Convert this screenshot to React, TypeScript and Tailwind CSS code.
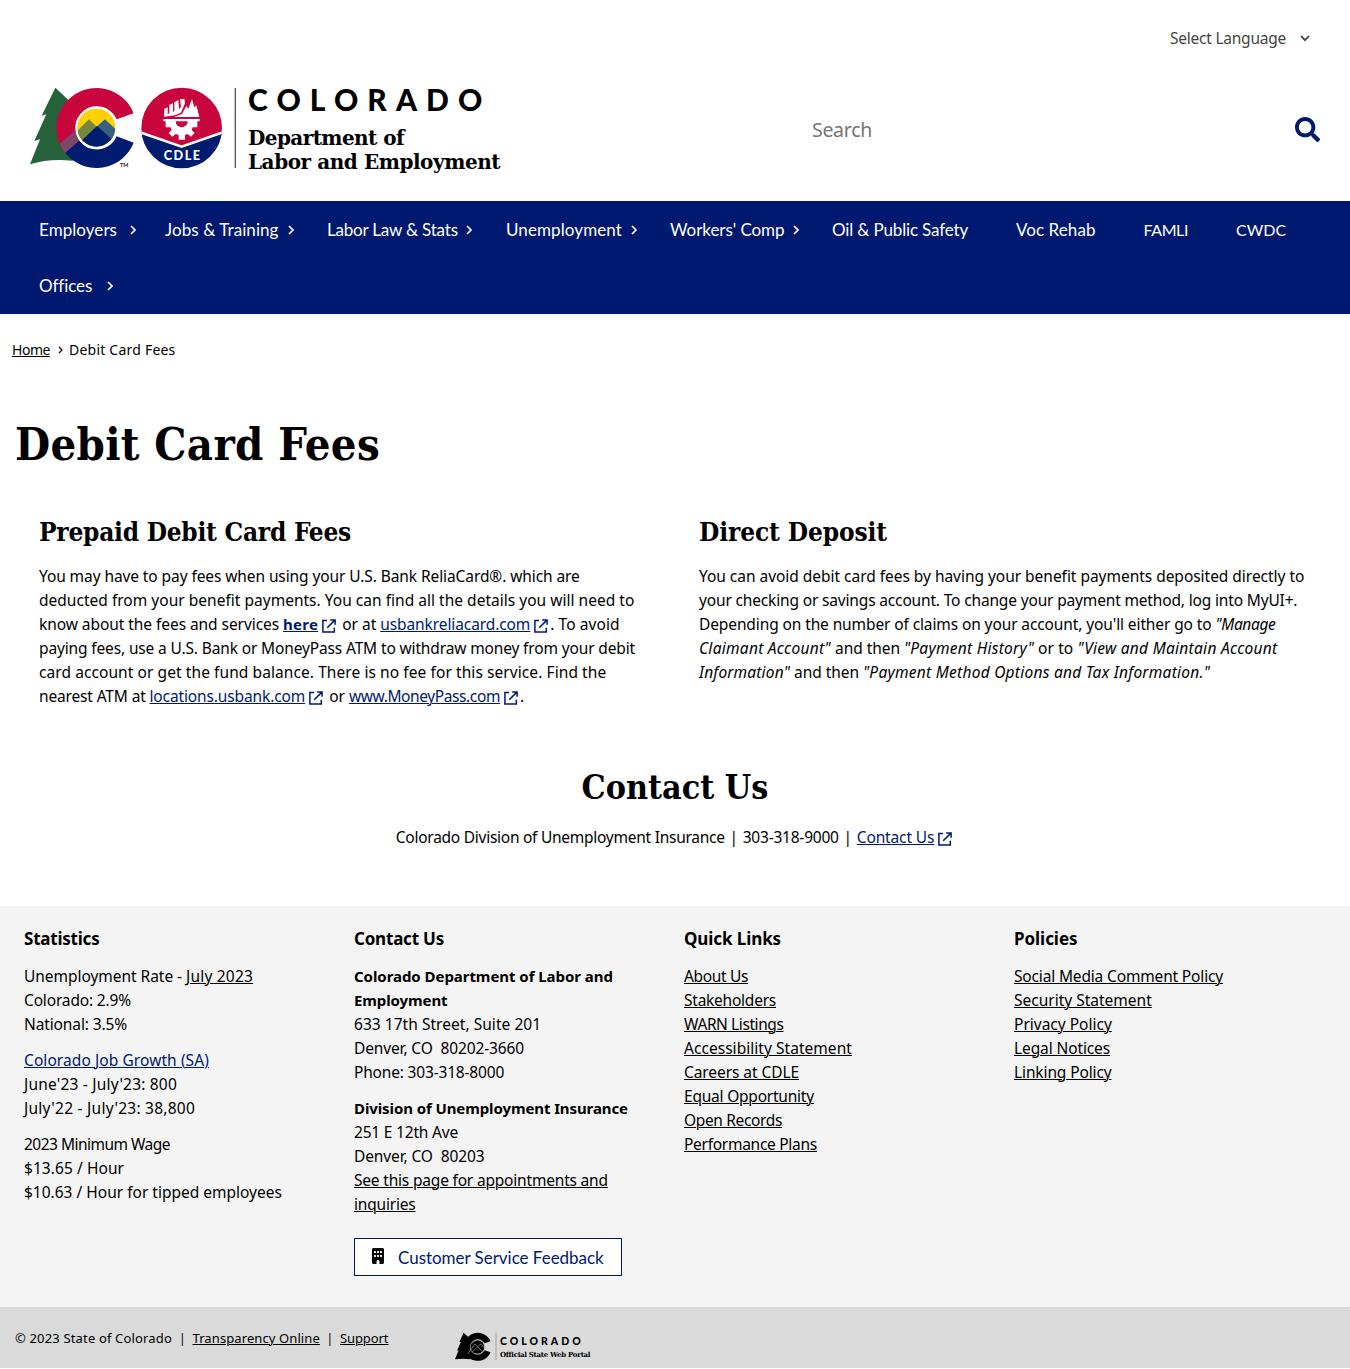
import type { ReactNode } from "react";
import { FaSearch } from "react-icons/fa";
import { FaBuilding } from "react-icons/fa6";

type Run = [text: string, tracking: string];

function Line({ children }: { children: ReactNode }) {
  return <span className="block h-6 whitespace-pre leading-6">{children}</span>;
}

function S({ t, c = "" }: { t: string; c?: string }) {
  return <span className={c}>{t}</span>;
}

function A({ t, c = "" }: { t: string; c?: string }) {
  return (
    <a href="#" className={`underline decoration-1 underline-offset-[0.5px] ${c}`}>
      {t}
    </a>
  );
}

function Ext() {
  return (
    <svg viewBox="0 0 14 14" fill="none" stroke="#001970" strokeWidth="1.5" className="ml-1 mr-[2px] inline-block h-[14px] w-[14px] align-[-3px]">
      <path d="M5 1.6H.9V13.1H12.3V8.8M5.2 8.8L12.4 1.6M8.2 1H13.1V5.8" />
    </svg>
  );
}

function Chevron({ className }: { className: string }) {
  return (
    <svg viewBox="0 0 7 10" fill="none" stroke="currentColor" strokeWidth="1.7" className={`h-[10px] w-[7px] shrink-0 ${className}`}>
      <path d="M1 1L5 5L1 9" />
    </svg>
  );
}

const nav = [
  { t: "Employers", w: "w-[126px]", c: "tracking-[.06px]", m: "ml-[13px]" },
  { t: "Jobs & Training", w: "w-[162px]", c: "tracking-[.08px]", m: "ml-[9px]" },
  { t: "Labor Law & Stats", w: "w-[179px]", c: "tracking-[-.2px]", m: "ml-[8px]" },
  { t: "Unemployment", w: "w-[164px]", c: "tracking-[.1px]", m: "ml-[9px]" },
  { t: "Workers' Comp", w: "w-[162px]", c: "tracking-[-.06px]", m: "ml-[9px]" },
  { t: "Oil & Public Safety", w: "w-[184px]", c: "tracking-[-.15px]" },
  { t: "Voc Rehab", w: "w-[127.5px]", c: "tracking-[.07px]" },
  { t: "FAMLI", w: "w-[92.5px]", c: "text-[16px] tracking-[-.4px]" },
  { t: "CWDC", w: "w-[80px]", c: "text-[16px]" },
  { t: "Offices", w: "w-[126px]", c: "tracking-[-.1px]", m: "ml-[15px]" },
];

const quick: Run[] = [
  ["About Us", "tracking-[-.35px]"],
  ["Stakeholders", "tracking-[-.24px]"],
  ["WARN Listings", "tracking-[-.41px]"],
  ["Accessibility Statement", "tracking-[.04px]"],
  ["Careers at CDLE", "tracking-[-.07px]"],
  ["Equal Opportunity", "tracking-[-.22px]"],
  ["Open Records", "tracking-[-.35px]"],
  ["Performance Plans", "tracking-[-.28px]"],
];

const policies: Run[] = [
  ["Social Media Comment Policy", "tracking-[-.16px]"],
  ["Security Statement", ""],
  ["Privacy Policy", ""],
  ["Legal Notices", "tracking-[-.11px]"],
  ["Linking Policy", "tracking-[-.12px]"],
];

function Logo() {
  return (
    <svg viewBox="0 0 630 270" className="h-[90px] w-[210px]">
      <defs>
        <clipPath id="cShape">
          <path d="M323 88A120 120 0 1 0 323 176L272 157A65 65 0 1 1 272 106Z" />
        </clipPath>
        <clipPath id="inner"><circle cx="211" cy="131" r="57" /></clipPath>
        <clipPath id="badge"><circle cx="467" cy="132" r="121" /></clipPath>
      </defs>
      <path d="M88 11L47 95L61 91L25 171L42 166L12 241Q70 222 140 230L180 180L140 60Z" fill="#256239" />
      <circle cx="211" cy="131" r="66" fill="#fff" />
      <g clipPath="url(#cShape)">
        <rect x="80" width="260" height="140" fill="#c8053c" />
        <rect x="80" y="80" width="90" height="120" fill="#c8053c" />
        <path d="M90 188L158 132V172L118 212Z" fill="#7d4769" />
        <path d="M110 214L165 165L240 140H340V260H120Z" fill="#001c70" />
      </g>
      <g clipPath="url(#inner)">
        <rect x="150" y="70" width="125" height="125" fill="#ffd100" />
        <path d="M145 149L189 106L214 130L160 190Z" fill="#76883e" />
        <path d="M208 131L237 106L275 141V190Z" fill="#35627f" />
        <path d="M152 184L213 126L270 176V200H150Z" fill="#001c70" />
      </g>
      <text x="282" y="249" fontSize="16" fontWeight="700" fontFamily="Lato" fill="#111">TM</text>
      <g clipPath="url(#badge)">
        <rect x="340" width="260" height="200" fill="#c8053c" />
        <path d="M340 146L467 190L594 146V260H340Z" fill="#001c70" />
        <path d="M340 144L467 188L594 144" fill="none" stroke="#fff" strokeWidth="8" />
      </g>
      <g fill="#fff">
        <path d="M412 105H521V112H514V130H500L497 138L506 147L495 158L485 150L477 153V167H458V153L449 150L439 158L428 147L437 138L433 130H419V112H412Z" />
        <path d="M449 112H485A18 18 0 0 1 449 112Z" fill="#c8053c" />
        <path d="M414 98L415 74L425 70V90L430 88V62L441 58V83L445 81V55L457 48L459 76L465 68L462 46L475 44L477 58L465 86L447 94Z" />
        <path d="M444 99L468 90L481 66L487 74L498 45L505 70L511 64L520 99Z" />
      </g>
      <path d="M412 101H521" stroke="#c8053c" strokeWidth="4" />
      <text x="413" y="227" fontSize="38" fontWeight="900" fontFamily="Lato" fill="#fff" textLength="109">CDLE</text>
      <path d="M628 12V252" stroke="#555" strokeWidth="4" />
    </svg>
  );
}

function MonoLogo() {
  return (
    <svg viewBox="0 0 126 90" className="h-[30px] w-[42px]">
      <path d="M26 2L13 30L18 29L6 56L11 55L0 82Q25 78 46 82L60 60L45 20Z" fill="#000" />
      <path d="M107 28A42 42 0 1 0 107 61L88 55A22 22 0 1 1 88 34Z" fill="#000" />
      <circle cx="68" cy="45" r="20" fill="#000" />
      <circle cx="68" cy="45" r="22.5" fill="none" stroke="#bbb" strokeWidth="2" />
      <path d="M38 66L60 36L68 44L77 36L90 50M52 60L68 44L84 60" fill="none" stroke="#aaa" strokeWidth="2" />
      <path d="M123 2V84" stroke="#888" strokeWidth="2" />
    </svg>
  );
}

const h2 = "whitespace-nowrap font-bold [font-stretch:condensed] font-['DejaVu_Serif_Condensed','DejaVu_Serif',serif]";
const b15 = "text-[15px] font-bold";
const fh = "h-6 whitespace-nowrap text-[17px] font-bold leading-6";

export default function App() {
  return (
    <div className="h-[1368px] w-[1350px] overflow-hidden bg-white font-['Noto_Sans',sans-serif] text-[15.5px] text-black">
      <header className="h-[201px]">
        <div className="flex h-[84px] justify-end pr-[40px] pt-[26px]">
          <div className="flex h-6 items-center leading-6 text-[#444]">
            <span className="tracking-[-.24px]">Select Language</span>
            <svg viewBox="0 0 10 7" fill="none" stroke="#444" strokeWidth="1.8" className="ml-[14px] mt-px h-[7px] w-[10px]">
              <path d="M1 1L5 5.2L9 1" />
            </svg>
          </div>
        </div>
        <div className="flex pl-[26px]">
          <Logo />
          <div className="ml-3 w-[564px]">
            <div className="h-[30px] font-['Lato',sans-serif] text-[30px] font-black leading-[30px] tracking-[9.1px]">COLORADO</div>
            <div className="mt-[13px] whitespace-nowrap font-['DejaVu_Serif',serif] text-[20px] font-bold leading-[23.5px]">
              <div className="tracking-[-.57px]">Department of</div>
              <div className="tracking-[-.44px]">Labor and Employment</div>
            </div>
          </div>
          <div className="mt-[30px] flex h-[30px] w-[508px] items-center justify-between text-[19.5px] text-[#757575]">
            <span className="pt-[2px] tracking-[-.29px]">Search</span>
            <FaSearch className="h-[25px] w-[25px] text-[#001970]" />
          </div>
        </div>
      </header>

      <nav className="flex h-[113px] flex-wrap content-start bg-[#001970] pl-[39px] font-['Lato',sans-serif] text-[17px] text-white">
        {nav.map((n) => (
          <a key={n.t} href="#" className={`flex h-14 items-center whitespace-nowrap pt-px ${n.w}`}>
            <span className={n.c}>{n.t}</span>
            {n.m && <Chevron className={`mt-px ${n.m}`} />}
          </a>
        ))}
      </nav>

      <div className="flex h-12 items-end pl-3 text-[14px] leading-6">
        <A t="Home" c="tracking-[-.46px]" />
        <svg viewBox="0 0 5 8" fill="none" stroke="#111" strokeWidth="1.3" className="mb-[8px] ml-[8px] mr-[6px] h-[8px] w-[5px]">
          <path d="M1 1L4 4L1 7" />
        </svg>
        <span className="tracking-[.22px]">Debit Card Fees</span>
      </div>

      <h1 className={`mt-[56px] h-[54px] pl-[15px] text-[45px] leading-[54px] tracking-[.33px] ${h2}`}>Debit Card Fees</h1>

      <main className="mt-[44px] flex pl-[39px]">
        <section className="w-[660px]">
          <h2 className={`h-8 text-[26px] leading-8 tracking-[-.25px] ${h2}`}>Prepaid Debit Card Fees</h2>
          <p className="mt-4">
            <Line><S t="You may have to pay fees when using your U.S. Bank ReliaCard®. which are" c="tracking-[-.09px]" /></Line>
            <Line><S t="deducted from your benefit payments. You can find all the details you will need to" c="tracking-[.02px]" /></Line>
            <Line>
              <S t="know about the fees and services " c="tracking-[-.06px]" />
              <A t="here" c="text-[15px] font-bold tracking-[.23px] text-[#001970]" /><Ext />
              <S t=" or at " />
              <A t="usbankreliacard.com" c="tracking-[-.1px] text-[#001970]" /><Ext />
              <S t=". To avoid" c="tracking-[.09px]" />
            </Line>
            <Line><S t="paying fees, use a U.S. Bank or MoneyPass ATM to withdraw money from your debit" c="tracking-[-.14px]" /></Line>
            <Line><S t="card account or get the fund balance. There is no fee for this service. Find the" c="tracking-[.08px]" /></Line>
            <Line>
              <S t="nearest ATM at " c="tracking-[-.15px]" />
              <A t="locations.usbank.com" c="tracking-[-.13px] text-[#001970]" /><Ext />
              <S t=" or " />
              <A t="www.MoneyPass.com" c="tracking-[-.4px] text-[#001970]" /><Ext />.
            </Line>
          </p>
        </section>
        <section>
          <h2 className={`h-8 text-[26px] leading-8 tracking-[-.11px] ${h2}`}>Direct Deposit</h2>
          <p className="mt-4">
            <Line><S t="You can avoid debit card fees by having your benefit payments deposited directly to" c="tracking-[-.03px]" /></Line>
            <Line><S t="your checking or savings account. To change your payment method, log into MyUI+." c="tracking-[-.16px]" /></Line>
            <Line>
              <S t="Depending on the number of claims on your account, you'll either go to " c="tracking-[-.11px]" />
              <S t={'"Manage'} c="italic tracking-[-.34px]" />
            </Line>
            <Line>
              <S t={'Claimant Account"'} c="italic tracking-[.27px]" />
              <S t=" and then " c="tracking-[-.04px]" />
              <S t={'"Payment History"'} c="italic tracking-[.26px]" />
              <S t=" or to " c="tracking-[.09px]" />
              <S t={'"View and Maintain Account'} c="italic tracking-[.28px]" />
            </Line>
            <Line>
              <S t={'Information"'} c="italic tracking-[.16px]" />
              <S t=" and then " c="tracking-[-.04px]" />
              <S t={'"Payment Method Options and Tax Information."'} c="italic tracking-[.26px]" />
            </Line>
          </p>
        </section>
      </main>

      <section className="mt-[59px] flex flex-col items-center">
        <h2 className={`h-10 text-[33.75px] leading-10 ${h2}`}>Contact Us</h2>
        <div className="mt-[18px] flex h-6 items-center leading-6">
          <S t="Colorado Division of Unemployment Insurance" c="tracking-[-.26px]" />
          <span className="w-[18px] text-center">|</span>
          <S t="303-318-9000" c="tracking-[-.22px]" />
          <span className="w-[18px] text-center">|</span>
          <A t="Contact Us" c="tracking-[-.14px] text-[#001970]" />
          <span className="pt-px leading-none"><Ext /></span>
        </div>
      </section>

      <footer className="mt-[57px]">
        <div className="grid h-[401px] grid-cols-[330px_330px_330px_330px] bg-[#f4f4f4] pl-6 pt-[21px]">
          <div>
            <h3 className={`${fh} tracking-[-.22px]`}>Statistics</h3>
            <p className="mt-[13px]">
              <Line><S t="Unemployment Rate - " c="tracking-[-.04px]" /><A t="July 2023" c="tracking-[.2px]" /></Line>
              <Line><S t="Colorado: 2.9%" c="tracking-[-.16px]" /></Line>
              <Line><S t="National: 3.5%" c="tracking-[-.12px]" /></Line>
            </p>
            <p className="mt-3">
              <Line><A t="Colorado Job Growth (SA)" c="tracking-[.08px] text-[#001970]" /></Line>
              <Line><S t="June'23 - July'23: 800" c="tracking-[.2px]" /></Line>
              <Line><S t="July'22 - July'23: 38,800" c="tracking-[.25px]" /></Line>
            </p>
            <p className="mt-3">
              <Line><S t="2023 Minimum Wage" c="tracking-[-.52px]" /></Line>
              <Line><S t="$13.65 / Hour" c="tracking-[.07px]" /></Line>
              <Line><S t="$10.63 / Hour for tipped employees" /></Line>
            </p>
          </div>
          <div>
            <h3 className={`${fh} tracking-[-.21px]`}>Contact Us</h3>
            <p className="mt-[13px]">
              <Line><S t="Colorado Department of Labor and" c={`${b15} tracking-[-.05px]`} /></Line>
              <Line><S t="Employment" c={`${b15} tracking-[-.1px]`} /></Line>
              <Line><S t="633 17th Street, Suite 201" c="tracking-[.04px]" /></Line>
              <Line><S t="Denver, CO  80202-3660" c="tracking-[-.13px]" /></Line>
              <Line><S t="Phone: 303-318-8000" c="tracking-[-.18px]" /></Line>
            </p>
            <p className="mt-3">
              <Line><S t="Division of Unemployment Insurance" c={`${b15} tracking-[-.1px]`} /></Line>
              <Line><S t="251 E 12th Ave" c="tracking-[-.2px]" /></Line>
              <Line><S t="Denver, CO  80203" c="tracking-[-.11px]" /></Line>
              <Line><A t="See this page for appointments and" c="tracking-[-.19px]" /></Line>
              <Line><A t="inquiries" c="tracking-[-.2px]" /></Line>
            </p>
            <a href="#" className="mt-[22px] flex h-[38px] w-[268px] items-center border border-[#001970] bg-white pl-[17px] font-['Lato',sans-serif] text-[17px] text-[#001970]">
              <FaBuilding className="-mt-[2px] h-4 w-3 text-black" />
              <span className="ml-[14px] pt-px tracking-[-.03px]">Customer Service Feedback</span>
            </a>
          </div>
          <div>
            <h3 className={`${fh} tracking-[-.09px]`}>Quick Links</h3>
            <div className="mt-[13px]">
              {quick.map(([t, c]) => <Line key={t}><A t={t} c={c} /></Line>)}
            </div>
          </div>
          <div>
            <h3 className={`${fh} tracking-[-.05px]`}>Policies</h3>
            <div className="mt-[13px]">
              {policies.map(([t, c]) => <Line key={t}><A t={t} c={c} /></Line>)}
            </div>
          </div>
        </div>
        <div className="flex h-[61px] bg-[#dadada] pl-[15px] text-[13px] leading-5">
          <div className="flex w-[440px] pt-[21px]">
            <span className="tracking-[.16px]">© 2023 State of Colorado</span>
            <span className="w-[20.5px] text-center">|</span>
            <A t="Transparency Online" c="tracking-[.1px]" />
            <span className="w-5 text-center">|</span>
            <A t="Support" c="tracking-[-.08px]" />
          </div>
          <div className="flex pt-[25px]">
            <MonoLogo />
            <div className="ml-[3px] whitespace-nowrap">
              <div className="mt-[4px] h-[10px] font-['Lato',sans-serif] text-[10.5px] font-black leading-[10px] tracking-[3px]">COLORADO</div>
              <div className="mt-[4px] font-['DejaVu_Serif',serif] text-[7px] font-bold leading-[9px] tracking-[-.28px]">Official State Web Portal</div>
            </div>
          </div>
        </div>
      </footer>
    </div>
  );
}
